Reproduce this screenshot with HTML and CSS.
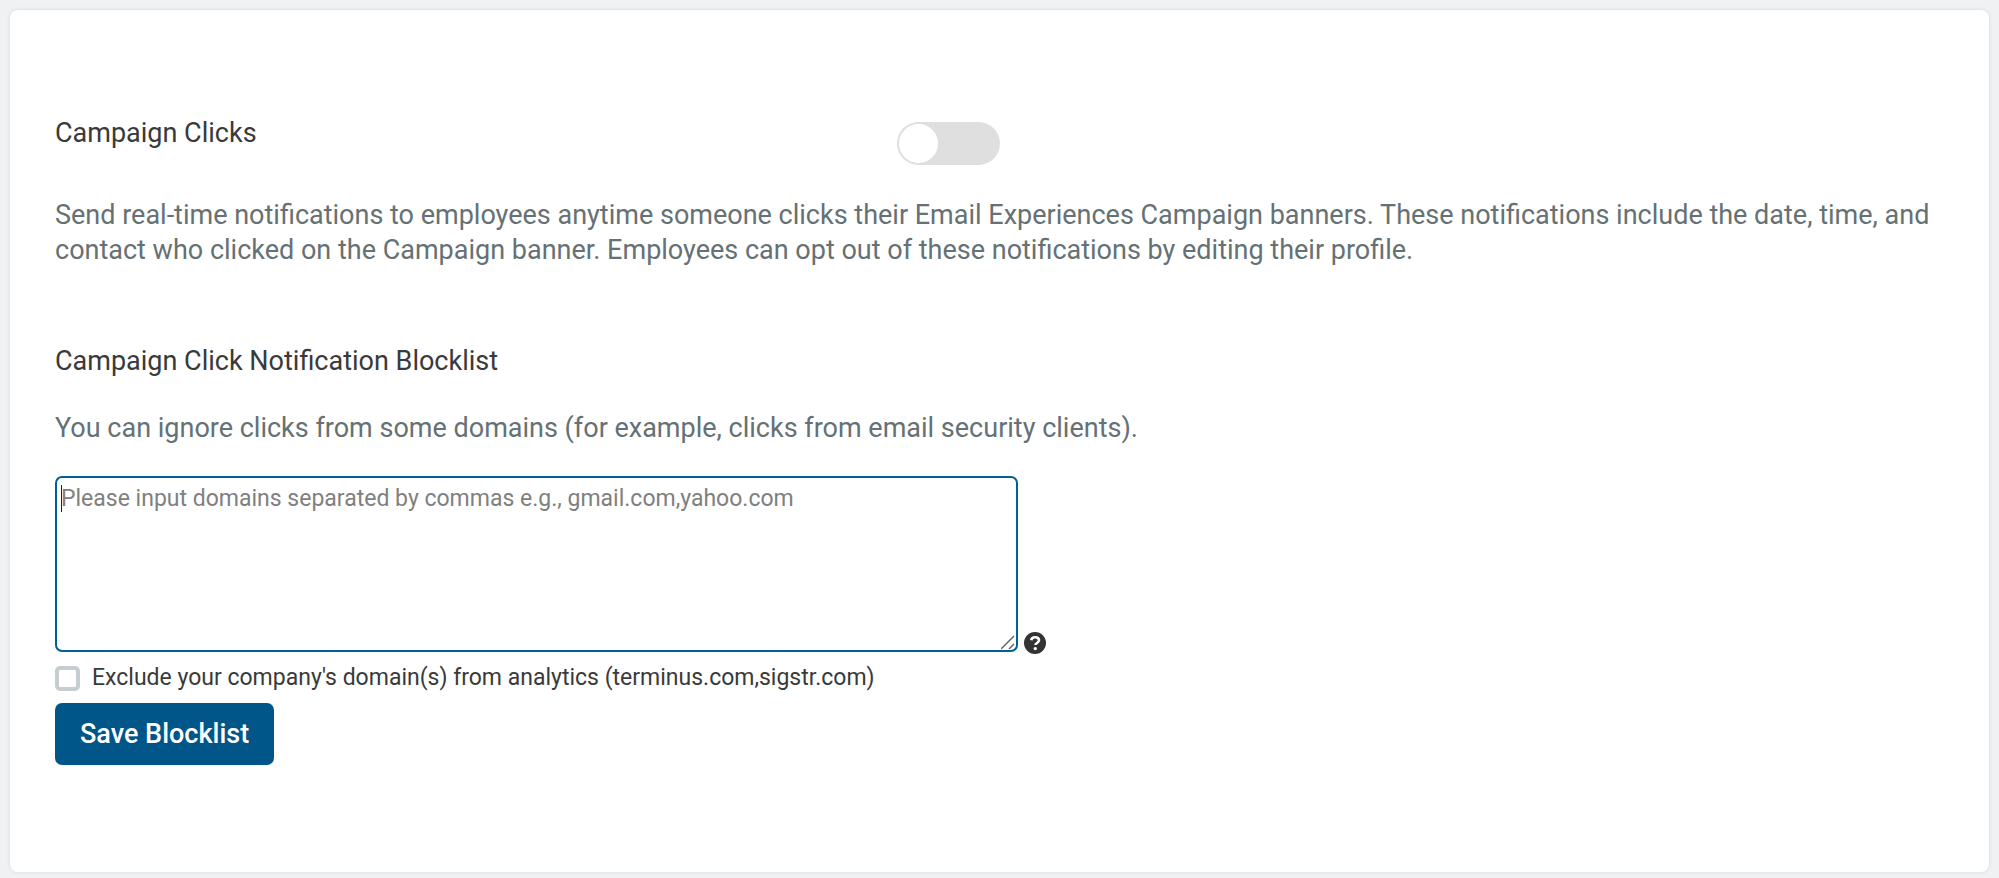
FILE: index.html
```html
<!DOCTYPE html>
<html lang="en">
<head>
<meta charset="utf-8">
<title>Campaign Click Notifications</title>
<link rel="stylesheet" href="styles.css">
</head>
<body>
<main class="card">
  <section class="setting">
    <div class="setting-head">
      <label class="title" for="clicks">Campaign Clicks</label>
      <input class="toggle" type="checkbox" role="switch" id="clicks">
    </div>
    <p class="description">Send real-time notifications to employees anytime someone clicks their Email Experiences Campaign banners. These notifications include the date, time, and contact who clicked on the Campaign banner. Employees can opt out of these notifications by editing their profile.</p>
  </section>
  <form class="blocklist">
    <label class="title" for="domains">Campaign Click Notification Blocklist</label>
    <p class="description">You can ignore clicks from some domains (for example, clicks from email security clients).</p>
    <div class="field">
      <textarea class="domains" id="domains" placeholder="Please input domains separated by commas e.g., gmail.com,yahoo.com"></textarea>
      <svg class="help" viewBox="0 0 22 22" role="img" aria-label="Help">
        <circle cx="11" cy="11" r="11" fill="#333"/>
        <path d="M7.200 8.200C7.600 6 9 5.200 11 5.200c2.200 0 4 1.200 4 3.100 0 2.700-3.600 2.600-3.600 4.800" fill="none" stroke="#fff" stroke-width="2.600"/>
        <circle cx="11.300" cy="16.600" r="1.700" fill="#fff"/>
      </svg>
    </div>
    <label class="exclude"><input class="check" type="checkbox">Exclude your company's domain(s) from analytics (terminus.com,sigstr.com)</label>
    <button class="save" type="button">Save Blocklist</button>
  </form>
</main>
</body>
</html>
```
FILE: styles.css
```css
* {
  box-sizing: border-box;
}

body {
  margin: 0;
  padding: 10px 10px 6px;
  background: #eff1f3;
  color: #3a3a3a;
  font-family: Roboto, "Liberation Sans", sans-serif;
  font-size: 27px;
  line-height: 35px;
}

.card {
  padding: 106px 45px 107px;
  background: #fff;
  border-radius: 8px;
  box-shadow: 0 0 3px 1px #dfe1e4;
}

.setting-head {
  display: grid;
  grid-template-columns: 44.6% 1fr;
  align-items: start;
}

.toggle {
  appearance: none;
  width: 103px;
  height: 43px;
  margin: 6px 0 0;
  padding: 2px;
  border-radius: 22px;
  background: #dfdfdf;
}

.toggle::before {
  content: "";
  display: block;
  width: 39px;
  height: 39px;
  border-radius: 50%;
  background: #fff;
}

.toggle:checked {
  padding-left: 62px;
  background: #005689;
}

.description {
  margin: 33px 0 0;
  color: #657174;
}

.blocklist {
  display: flex;
  flex-direction: column;
  align-items: flex-start;
  margin-top: 76px;
}

.field {
  position: relative;
  display: flex;
  align-items: flex-end;
  gap: 6px;
  width: 100%;
  margin-top: 30px;
}

/* insertion point of the focused, empty box */
.field::before {
  content: "";
  position: absolute;
  top: 9px;
  left: 6px;
  width: 1px;
  height: 27px;
  background: #222;
}

.field:has(.domains:not(:placeholder-shown))::before {
  display: none;
}

.blocklist .description {
  margin-top: 32px;
}

.domains {
  width: 51%;
  height: 176px;
  padding: 7px 4px;
  border: 2px solid #005f96;
  border-radius: 7px;
  outline: none;
  background: #fff;
  color: #333;
  font-family: inherit;
  font-size: 23px;
  line-height: 28px;
  resize: both;
}

.domains::placeholder {
  color: #808080;
}

.domains::-webkit-resizer {
  background: url("data:image/svg+xml,%3Csvg xmlns='http://www.w3.org/2000/svg' width='15' height='15'%3E%3Cpath d='M0 14L13 1M8 14L13 9' stroke='%23666' stroke-width='1.500'/%3E%3C/svg%3E") no-repeat;
}

.help {
  width: 22px;
  height: 22px;
  margin-bottom: -2px;
}

.exclude {
  display: flex;
  align-items: center;
  gap: 12px;
  margin-top: 12px;
  font-size: 23px;
  line-height: 28px;
}

.check {
  appearance: none;
  width: 25px;
  height: 25px;
  margin: 0;
  border: 4px solid #c5cdd1;
  border-radius: 5px;
  background: #fff;
}

.check:checked {
  background: #005689;
}

.save {
  margin-top: 11px;
  padding: 14px 25px 13px;
  border: 0;
  border-radius: 7px;
  background: #005689;
  color: #fff;
  font-family: inherit;
  font-size: 27px;
  font-weight: 500;
  line-height: 35px;
}
```
